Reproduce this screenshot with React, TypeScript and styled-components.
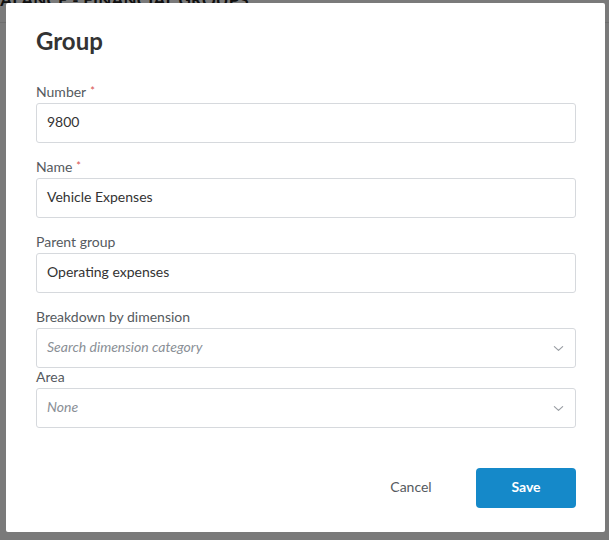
import React from "react";
import styled, { createGlobalStyle } from "styled-components";

const Global = createGlobalStyle`
  html, body { margin: 0; padding: 0; }
  body {
    font-family: Lato, "Noto Sans", "Liberation Sans", sans-serif;
    background: #ffffff;
    width: 609px;
    height: 540px;
    overflow: hidden;
  }
  * { box-sizing: border-box; }
`;

const Page = styled.div`
  position: relative;
  width: 609px;
  height: 540px;
  overflow: hidden;
  background: #ffffff;
`;

const PageHeader = styled.div`
  height: 23px;
  border-bottom: 1px solid #e6e6e6;
  overflow: hidden;
`;

const PageTitle = styled.div`
  margin: -11px 0 0 -11px;
  font-size: 17px;
  font-weight: 700;
  letter-spacing: 0.2px;
  color: #222;
  white-space: nowrap;
`;

const Overlay = styled.div`
  position: absolute;
  inset: 0;
  background: rgba(0, 0, 0, 0.52);
  display: flex;
  align-items: flex-start;
  padding: 3px 0 0 6px;
`;

const Modal = styled.div`
  width: 599px;
  height: 529px;
  background: #ffffff;
  border-radius: 2px;
  padding: 23px 29px 24px 30px;
  display: flex;
  flex-direction: column;
`;

const Title = styled.h2`
  margin: 0 0 27px;
  font-size: 24px;
  line-height: 30px;
  font-weight: 700;
  color: #333333;
`;

const Form = styled.div`
  display: flex;
  flex-direction: column;
`;

const Field = styled.div<{ $tight?: boolean }>`
  display: flex;
  flex-direction: column;
  margin-bottom: ${(p) => (p.$tight ? "0" : "15px")};
`;

const Label = styled.label`
  font-size: 14px;
  line-height: 18px;
  padding-bottom: 2px;
  color: #555a60;
`;

const Req = styled.span`
  color: #d9534f;
  font-size: 11px;
  vertical-align: top;
  margin-left: 4px;
  line-height: 15px;
`;

const Box = styled.div`
  height: 40px;
  border: 1px solid #d6d9dd;
  border-radius: 3px;
  display: flex;
  align-items: center;
  padding: 0 10px 3px;
  font-size: 14px;
  color: #333333;
  background: #ffffff;
`;

const Value = styled.span`
  flex: 1;
`;

const Placeholder = styled.span`
  flex: 1;
  font-style: italic;
  color: #8a8f96;
`;

const Chevron = styled.svg`
  width: 11px;
  height: 11px;
  margin: 3px 1px 0 0;
`;

const Footer = styled.div`
  margin-top: auto;
  display: flex;
  justify-content: flex-end;
  align-items: center;
  gap: 30px;
`;

const CancelButton = styled.button`
  border: none;
  background: transparent;
  font-family: inherit;
  font-size: 14px;
  color: #555a60;
  width: 70px;
  height: 40px;
  padding: 0 0 3px;
  cursor: pointer;
`;

const SaveButton = styled.button`
  border: none;
  width: 100px;
  height: 40px;
  padding: 0 0 3px;
  border-radius: 4px;
  background: #1589c9;
  color: #ffffff;
  font-family: inherit;
  font-size: 14px;
  font-weight: 700;
  cursor: pointer;
`;

const Down = () => (
  <Chevron viewBox="0 0 12 12" fill="none">
    <path d="M1.5 4 L6 8 L10.5 4" stroke="#9a9ea4" strokeWidth="1.3" strokeLinecap="round" strokeLinejoin="round" />
  </Chevron>
);

export default function App() {
  return (
    <Page>
      <Global />
      <PageHeader>
        <PageTitle>BALANCE - FINANCIAL GROUPS</PageTitle>
      </PageHeader>
      <Overlay>
        <Modal>
          <Title>Group</Title>
          <Form>
            <Field>
              <Label>
                Number<Req>*</Req>
              </Label>
              <Box>
                <Value>9800</Value>
              </Box>
            </Field>
            <Field>
              <Label>
                Name<Req>*</Req>
              </Label>
              <Box>
                <Value>Vehicle Expenses</Value>
              </Box>
            </Field>
            <Field>
              <Label>Parent group</Label>
              <Box>
                <Value>Operating expenses</Value>
              </Box>
            </Field>
            <Field $tight>
              <Label>Breakdown by dimension</Label>
              <Box>
                <Placeholder>Search dimension category</Placeholder>
                <Down />
              </Box>
            </Field>
            <Field $tight>
              <Label>Area</Label>
              <Box>
                <Placeholder>None</Placeholder>
                <Down />
              </Box>
            </Field>
          </Form>
          <Footer>
            <CancelButton>Cancel</CancelButton>
            <SaveButton>Save</SaveButton>
          </Footer>
        </Modal>
      </Overlay>
    </Page>
  );
}
